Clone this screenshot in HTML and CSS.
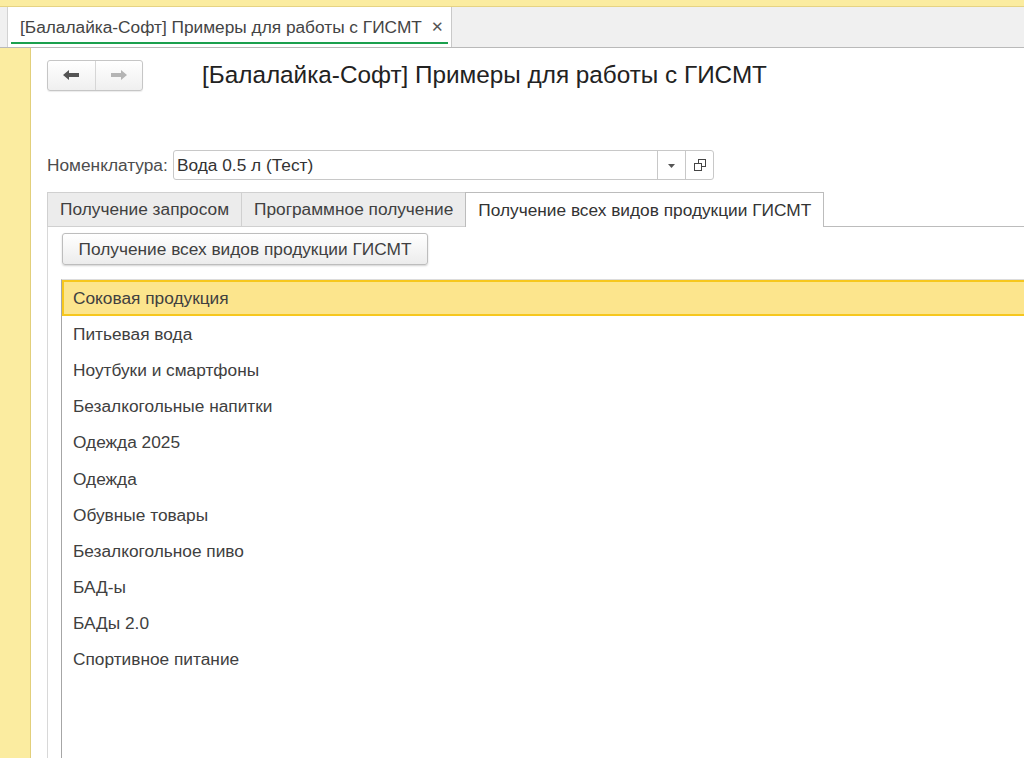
FILE: index.html
```html
<!DOCTYPE html>
<html lang="ru">
  <head>
    <meta charset="UTF-8" />
    <title>[Балалайка-Софт] Примеры для работы с ГИСМТ</title>
    <link rel="stylesheet" href="styles.css">
  </head>
  <body>
    <div class="topline"></div>

    <!-- Панель открытых окон -->
    <div class="tabbar">
      <div class="doc-tab">
        <span class="doc-tab-title">[Балалайка-Софт] Примеры для работы с ГИСМТ</span>
        <span class="doc-tab-close">&#x2715;</span>
      </div>
    </div>

    <div class="workspace">
      <div class="sidepanel"></div>

      <div class="form">
        <!-- Навигация и заголовок формы -->
        <div class="form-header">
          <div class="nav-buttons">
            <button class="nav-btn">
              <svg width="18" height="12" viewBox="0 0 18 12">
                <path d="M1 6 L7 1 L7 4 L17 4 L17 8 L7 8 L7 11 Z" fill="#555" />
              </svg>
            </button>
            <button class="nav-btn">
              <svg width="18" height="12" viewBox="0 0 18 12">
                <path d="M17 6 L11 1 L11 4 L1 4 L1 8 L11 8 L11 11 Z" fill="#b4b4b4" />
              </svg>
            </button>
          </div>
          <h1 class="form-title">[Балалайка-Софт] Примеры для работы с ГИСМТ</h1>
        </div>

        <!-- Поле номенклатуры -->
        <div class="field-row">
          <label class="field-label">Номенклатура:</label>
          <div class="field-input">
            <span class="field-value">Вода 0.5 л (Тест)</span>
            <span class="field-btn field-btn-drop">
              <svg width="7" height="4" viewBox="0 0 7 4"><path d="M0 0 L7 0 L3.5 4 Z" fill="#555" /></svg>
            </span>
            <span class="field-btn">
              <svg width="12" height="12" viewBox="0 0 12 12">
                <rect x="4.5" y="0.5" width="7" height="7" fill="none" stroke="#444" />
                <rect x="0.5" y="4.5" width="7" height="7" fill="#fff" stroke="#444" />
              </svg>
            </span>
          </div>
        </div>

        <!-- Закладки -->
        <div class="tabs">
          <div class="tab">Получение запросом</div>
          <div class="tab">Программное получение</div>
          <div class="tab tab-active">Получение всех видов продукции ГИСМТ</div>
          <div class="tabs-rest"></div>
        </div>

        <div class="tab-page">
          <button class="cmd-btn">Получение всех видов продукции ГИСМТ</button>

          <div class="list">
            <div class="list-row selected">Соковая продукция</div>
            <div class="list-row">Питьевая вода</div>
            <div class="list-row">Ноутбуки и смартфоны</div>
            <div class="list-row">Безалкогольные напитки</div>
            <div class="list-row">Одежда 2025</div>
            <div class="list-row">Одежда</div>
            <div class="list-row">Обувные товары</div>
            <div class="list-row">Безалкогольное пиво</div>
            <div class="list-row">БАД-ы</div>
            <div class="list-row">БАДы 2.0</div>
            <div class="list-row">Спортивное питание</div>
          </div>
        </div>
      </div>
    </div>
  </body>
</html>
```

FILE: styles.css
```css
body {
  margin: 0;
  width: 1024px;
  height: 758px;
  overflow: hidden;
  font-family: Arial, "Liberation Sans", sans-serif;
  font-size: 17.3px;
  color: #4d4d4d;
  background: #fff;
  display: flex;
  flex-direction: column;
}

.topline {
  height: 6px;
  background: #fbeca0;
  border-bottom: 1px solid #e6d383;
}

.tabbar {
  height: 40px;
  background: #f0f0f0;
  border-bottom: 1px solid #b9b9b9;
  display: flex;
}

.doc-tab {
  margin-left: 7px;
  width: 445px;
  background: #fff;
  border-left: 1px solid #d2d2d2;
  border-right: 1px solid #c9c9c9;
  display: flex;
  align-items: center;
  padding-left: 12px;
  box-sizing: border-box;
  position: relative;
  color: #444;
}

.doc-tab::after {
  content: "";
  position: absolute;
  left: 3px;
  right: 3px;
  bottom: 3px;
  height: 2px;
  background: #1ba04e;
}

.doc-tab-close {
  margin-left: 9px;
  font-size: 15px;
  color: #555;
}

.workspace {
  flex: 1;
  display: flex;
}

.sidepanel {
  width: 30px;
  background: #fbeca0;
  border-right: 1px solid #e2cf7b;
}

.form {
  flex: 1;
  padding-left: 16px;
  display: flex;
  flex-direction: column;
  min-width: 0;
}

.form-header {
  display: flex;
  align-items: center;
  margin-top: 11px;
  height: 32px;
}

.nav-buttons {
  display: flex;
  width: 96px;
  height: 31px;
  border: 1px solid #c6c6c6;
  border-radius: 3px;
  box-sizing: border-box;
  background: linear-gradient(#fff, #efefef);
  box-shadow: 0 1px 1px rgba(0, 0, 0, 0.08);
}

.nav-btn {
  flex: 1;
  border: none;
  background: none;
  padding: 0;
  display: flex;
  align-items: center;
  justify-content: center;
}

.nav-btn + .nav-btn {
  border-left: 1px solid #d6d6d6;
}

.form-title {
  margin: 0 0 0 59px;
  font-size: 24.3px;
  font-weight: normal;
  color: #222;
}

.field-row {
  display: flex;
  align-items: center;
  margin-top: 59px;
  height: 30px;
}

.field-label {
  width: 126px;
  color: #4d4d4d;
}

.field-input {
  width: 541px;
  height: 30px;
  box-sizing: border-box;
  border: 1px solid #c8c8c8;
  border-radius: 3px;
  display: flex;
  align-items: stretch;
}

.field-value {
  flex: 1;
  padding-left: 3px;
  display: flex;
  align-items: center;
  color: #333;
}

.field-btn {
  width: 27px;
  border-left: 1px solid #c8c8c8;
  display: flex;
  align-items: center;
  justify-content: center;
}

.field-btn-drop svg {
  margin-top: 1px;
}

.tabs {
  display: flex;
  margin-top: 12px;
  height: 35px;
}

.tab {
  padding: 0 12px;
  display: flex;
  align-items: center;
  background: #ececec;
  border: 1px solid #d0d0d0;
  border-right: none;
  color: #404040;
}

.tab-active {
  background: #fff;
  border: 1px solid #bcbcbc;
  border-bottom: none;
  color: #333;
}

.tabs-rest {
  flex: 1;
  border-bottom: 1px solid #bcbcbc;
}

.tab-page {
  flex: 1;
  border-left: 1px solid #d8d8d8;
  display: flex;
  flex-direction: column;
  padding-left: 13px;
}

.cmd-btn {
  align-self: flex-start;
  margin: 6px 0 0 1px;
  width: 366px;
  height: 32px;
  font-family: inherit;
  font-size: 17.3px;
  color: #404040;
  background: linear-gradient(#fff, #ececec);
  border: 1px solid #bdbdbd;
  border-radius: 3px;
  box-shadow: 0 1px 2px rgba(0, 0, 0, 0.18);
}

.list {
  flex: 1;
  margin-top: 14px;
  border-left: 1px solid #a6a6a6;
  border-top: 1px solid #dcdcdc;
}

.list-row {
  height: 36.2px;
  display: flex;
  align-items: center;
  padding-left: 11px;
  box-sizing: border-box;
  color: #404040;
}

.list-row.selected {
  background: #fce58d;
  border: 2px solid #f6c71e;
  border-right: none;
  padding-left: 9px;
}
```
